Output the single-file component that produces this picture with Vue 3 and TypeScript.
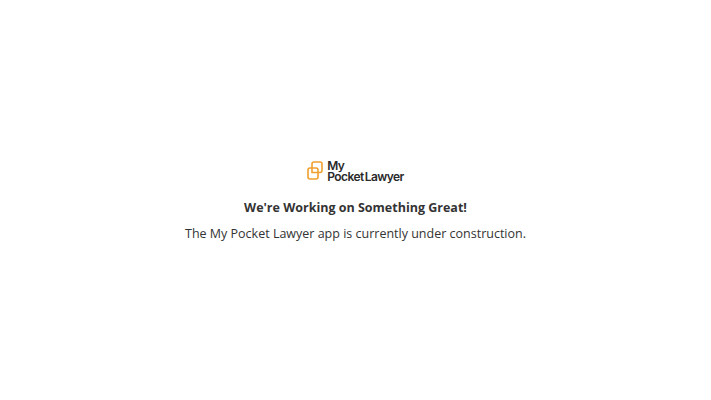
<script setup lang="ts">
const title = "We're Working on Something Great!";
const message = "The My Pocket Lawyer app is currently under construction.";
</script>

<template>
  <main class="page">
    <div class="logo">
      <svg class="mark" width="16" height="19" viewBox="0 0 16 19" fill="none" stroke="#f0a030" stroke-width="1.6">
        <path d="M5 7V3a2 2 0 0 1 2-2h6a2 2 0 0 1 2 2v6.500a2 2 0 0 1-2 2h-2" />
        <rect x="1" y="7" width="10" height="11" rx="2" />
        <path d="M5 7v4.500h6" />
      </svg>
      <div class="wordmark">
        <span class="line">My</span>
        <span class="line">Pocket<span class="tight">Lawyer</span></span>
      </div>
    </div>
    <h1 class="title">{{ title }}</h1>
    <p class="message">{{ message }}</p>
  </main>
</template>

<style>
html, body { margin: 0; background: #fff; }
</style>

<style scoped>
.page {
  box-sizing: border-box;
  height: 400px;
  padding-top: 3.5px;
  display: flex;
  flex-direction: column;
  align-items: center;
  justify-content: center;
  font-family: "Open Sans", sans-serif;
  color: #333;
}
.logo {
  display: flex;
  align-items: center;
  gap: 4px;
  margin-bottom: 16.5px;
}
.wordmark {
  display: flex;
  flex-direction: column;
  font-family: Inter, sans-serif;
  font-size: 12px;
  font-weight: 600;
  line-height: 11px;
  letter-spacing: -0.55px;
  color: #2a2a2a;
}
.line { display: block; white-space: nowrap; }
.tight { margin-left: 1px; }
.title {
  margin: 0 0 6px;
  font-size: 12.5px;
  line-height: 20px;
  font-weight: 700;
}
.message {
  margin: 0;
  font-size: 12.5px;
  line-height: 20px;
  font-weight: 400;
}
</style>
